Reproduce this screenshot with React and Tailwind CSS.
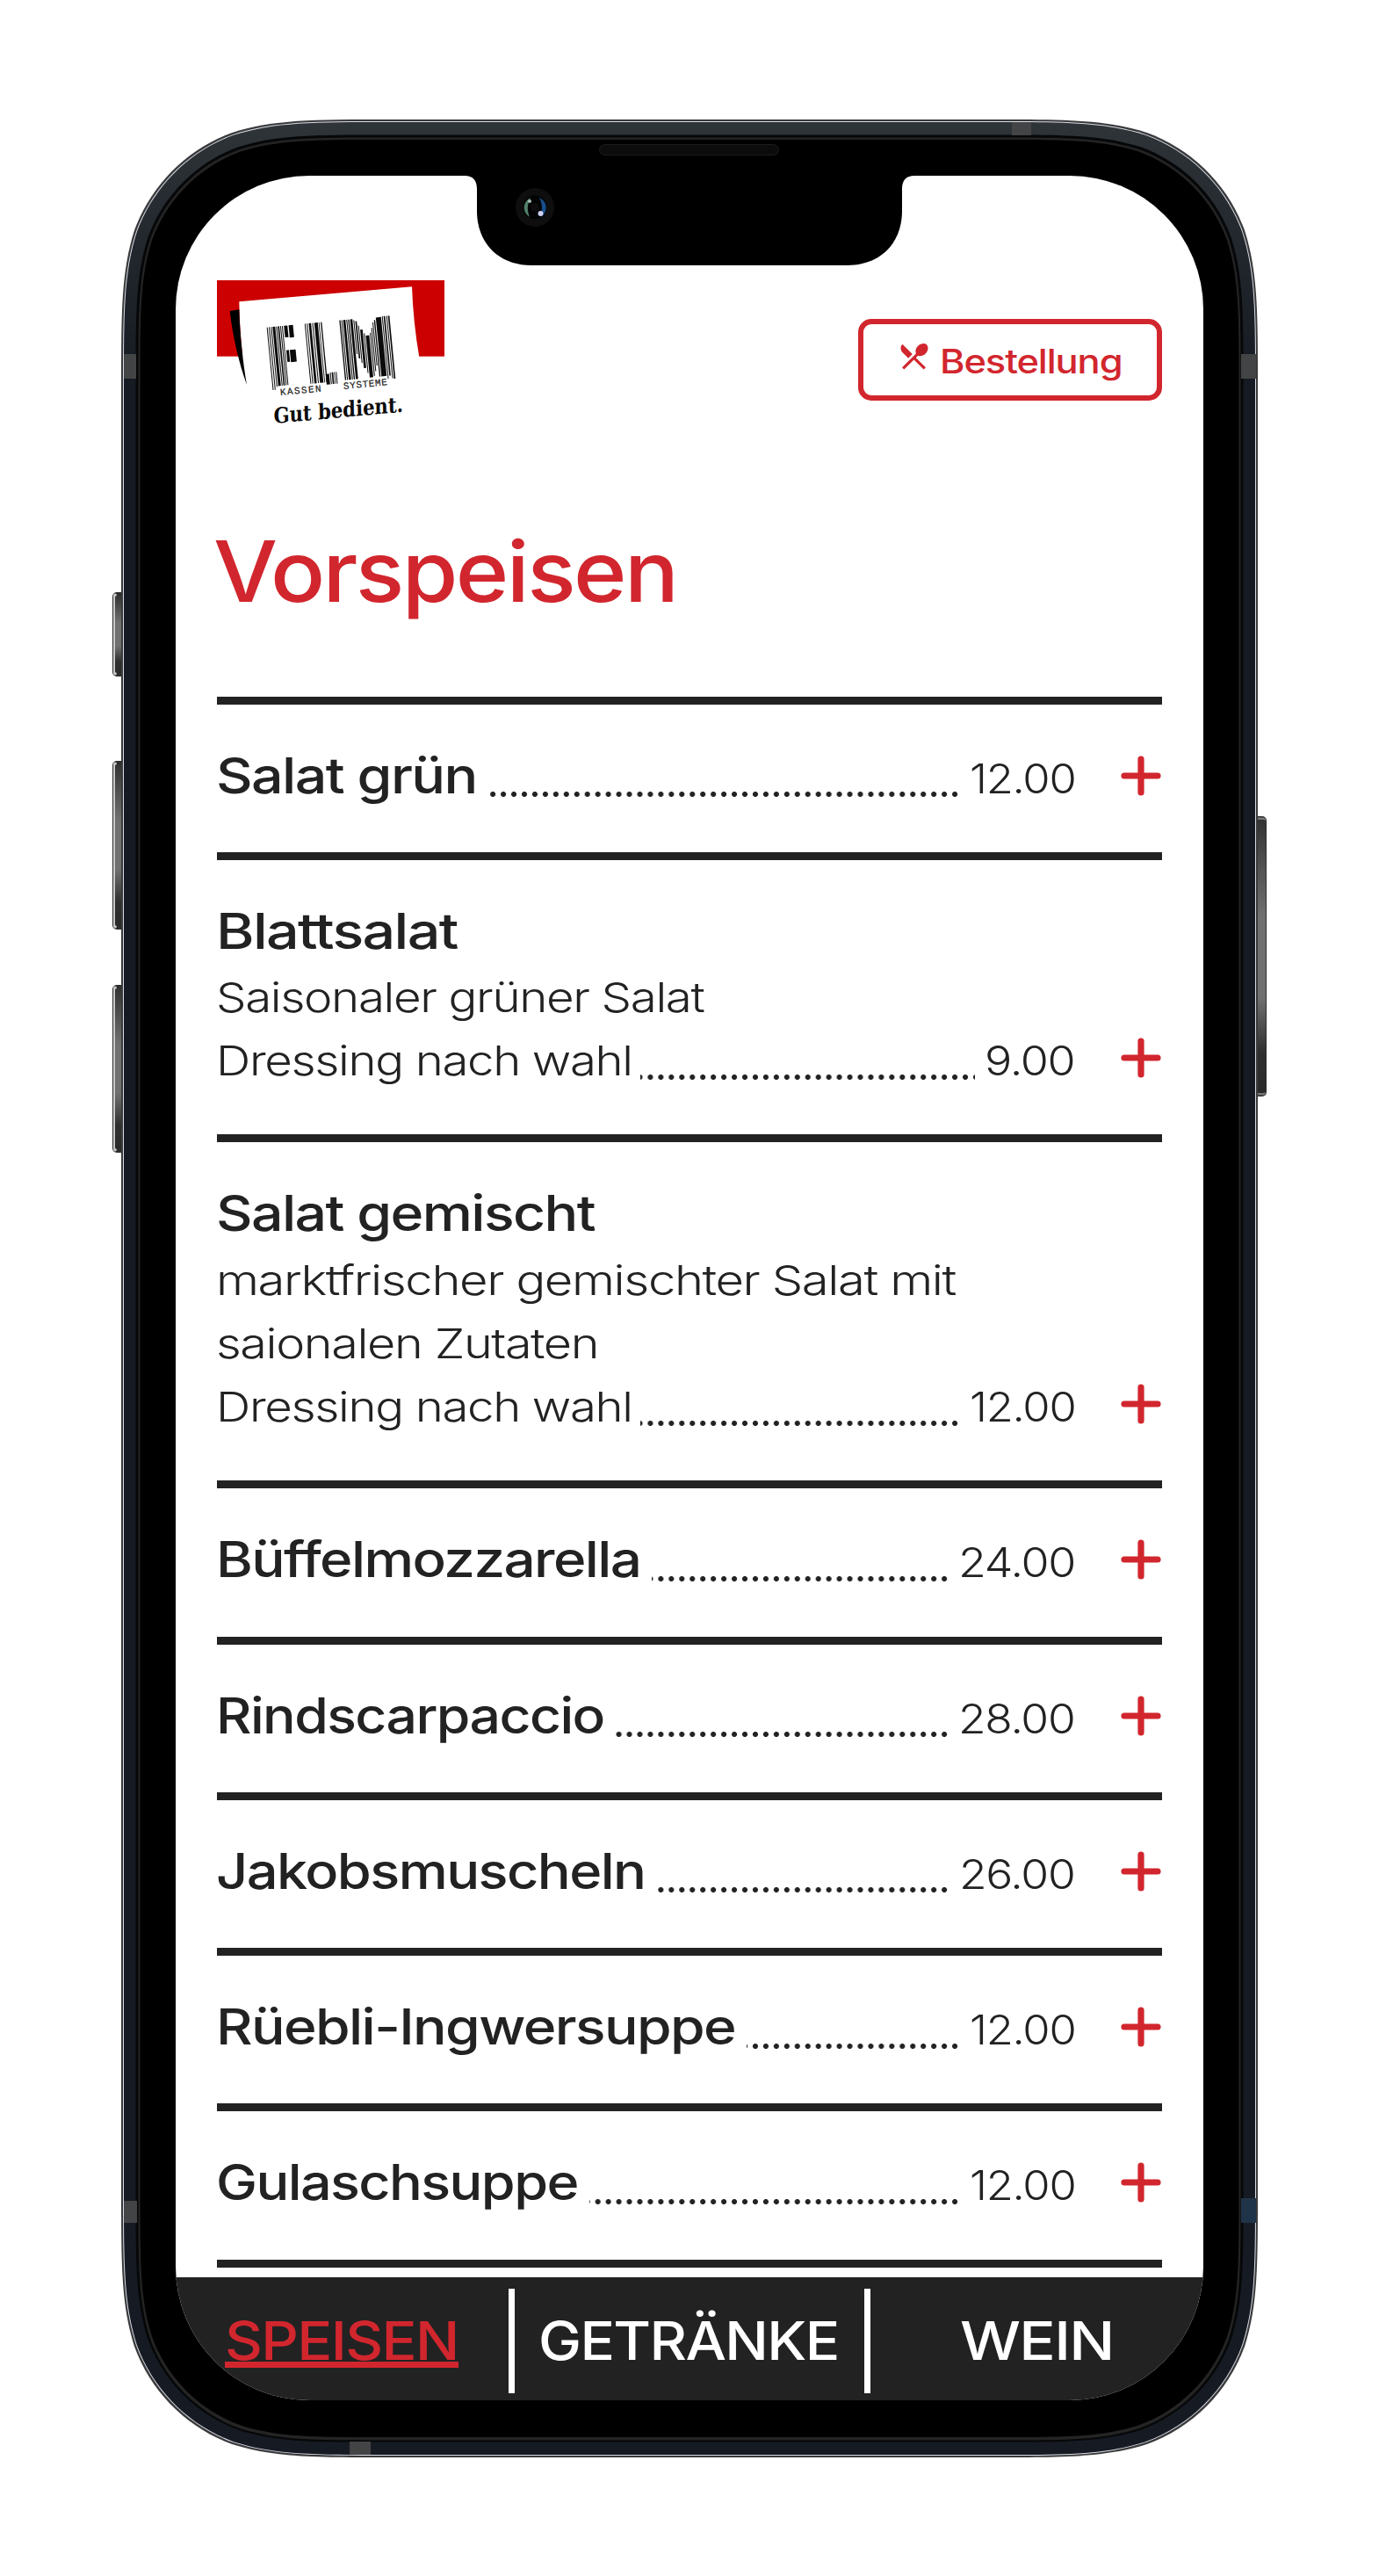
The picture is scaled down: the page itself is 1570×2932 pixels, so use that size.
import { useLayoutEffect, useRef, useState } from "react";
import { MdRestaurantMenu } from "react-icons/md";

const DISHES = [
  { lines: [["Salat grün", 297]], price: "12.00", priceWidth: 120 },
  {
    lines: [["Blattsalat", 275], ["Saisonaler grüner Salat", 556], ["Dressing nach wahl", 474]],
    price: "9.00",
    priceWidth: 103,
  },
  {
    lines: [
      ["Salat gemischt", 431],
      ["marktfrischer gemischter Salat mit", 842],
      ["saionalen Zutaten", 435],
      ["Dressing nach wahl", 474],
    ],
    price: "12.00",
    priceWidth: 120,
  },
  { lines: [["Büffelmozzarella", 483]], price: "24.00", priceWidth: 133 },
  { lines: [["Rindscarpaccio", 442]], price: "28.00", priceWidth: 133 },
  { lines: [["Jakobsmuscheln", 488]], price: "26.00", priceWidth: 132 },
  { lines: [["Rüebli-Ingwersuppe", 591]], price: "12.00", priceWidth: 120 },
  { lines: [["Gulaschsuppe", 412]], price: "12.00", priceWidth: 120 },
];

// Stretches a run of text horizontally so that it fills the given width.
function Fit({ width, className = "", children }) {
  const ref = useRef(null);
  const [scale, setScale] = useState(1);
  useLayoutEffect(() => {
    const measure = () => {
      if (ref.current) setScale(width / ref.current.offsetWidth);
    };
    measure();
    document.fonts?.ready.then(measure);
  }, [width]);
  return (
    <span className={`block shrink-0 tracking-[-0.025em] whitespace-nowrap ${className}`} style={{ width }}>
      <span ref={ref} className="inline-block origin-left" style={{ transform: `scaleX(${scale})` }}>
        {children}
      </span>
    </span>
  );
}

// Rounded rectangle with continuous-curvature corners.
function smooth(x, y, w, h, r) {
  const a = 1.528665 * r, b = 1.08849 * r, c = 0.868407 * r;
  const d = 0.631494 * r, e = 0.074911 * r, f = 0.372824 * r, g = 0.16906 * r;
  const X = x + w, Y = y + h;
  return [
    `M${x + a} ${y}H${X - a}`,
    `C${X - b} ${y} ${X - c} ${y} ${X - d} ${y + e}`,
    `C${X - f} ${y + g} ${X - g} ${y + f} ${X - e} ${y + d}`,
    `C${X} ${y + c} ${X} ${y + b} ${X} ${y + a}V${Y - a}`,
    `C${X} ${Y - b} ${X} ${Y - c} ${X - e} ${Y - d}`,
    `C${X - g} ${Y - f} ${X - f} ${Y - g} ${X - d} ${Y - e}`,
    `C${X - c} ${Y} ${X - b} ${Y} ${X - a} ${Y}H${x + a}`,
    `C${x + b} ${Y} ${x + c} ${Y} ${x + d} ${Y - e}`,
    `C${x + f} ${Y - g} ${x + g} ${Y - f} ${x + e} ${Y - d}`,
    `C${x} ${Y - c} ${x} ${Y - b} ${x} ${Y - a}V${y + a}`,
    `C${x} ${y + b} ${x} ${y + c} ${x + e} ${y + d}`,
    `C${x + g} ${y + f} ${x + f} ${y + g} ${x + d} ${y + e}`,
    `C${x + c} ${y} ${x + b} ${y} ${x + a} ${y}Z`,
  ].join("");
}

function SideButton({ x, y, h, right }) {
  return (
    <g transform={right ? `translate(${x + 13} ${y}) scale(-1 1)` : `translate(${x} ${y})`}>
      <rect width="20" height={h} rx="5" fill="#2d2d2d" />
      <rect x="1" y="1.500" width={right ? 14 : 4} height={h - 3} rx="3" fill={right ? "#777" : "#c9cac7"} />
      <rect x={right ? 1 : 3} y="4" width="14" height={h - 8} rx="2" fill="url(#btn)" />
    </g>
  );
}

function Body() {
  return (
    <svg className="absolute inset-0" width="1570" height="2932" viewBox="0 0 1570 2932" aria-hidden="true">
      <defs>
        <linearGradient id="metal" x1="0" y1="0" x2="0" y2="1">
          <stop offset="0" stopColor="#2e3438" />
          <stop offset="0.05" stopColor="#23282e" />
          <stop offset="0.11" stopColor="#161b23" />
          <stop offset="1" stopColor="#161b23" />
        </linearGradient>
        <linearGradient id="btn" x1="0" y1="0" x2="0" y2="1">
          <stop offset="0" stopColor="#333" />
          <stop offset="0.35" stopColor="#707070" />
          <stop offset="0.65" stopColor="#707070" />
          <stop offset="0.85" stopColor="#303030" />
          <stop offset="1" stopColor="#2a2a2a" />
        </linearGradient>
      </defs>
      <SideButton x={128} y={674} h={96} />
      <SideButton x={128} y={866} h={192} />
      <SideButton x={128} y={1121} h={191} />
      <SideButton x={1429} y={929} h={319} right />
      <path d={smooth(138, 136, 1294, 2661, 200)} fill="#3a3a3c" />
      <path d={smooth(140, 138, 1290, 2657, 199)} fill="#d9dde6" />
      <path d={smooth(141, 139, 1288, 2655, 198)} fill="url(#metal)" />
      <path d={smooth(154.5, 153.5, 1261, 2626, 185)} fill="#060708" />
      <path d={smooth(157.5, 156.5, 1255, 2621, 182)} fill="#242424" />
      <path d={smooth(159.5, 159, 1251, 2615, 181)} fill="#000" />
      <g fill="#424445">
        <rect x="1152" y="139" width="22" height="15" />
        <rect x="141" y="403" width="14" height="28" />
        <rect x="1413" y="403" width="17" height="28" />
        <rect x="141" y="2505" width="15" height="25" />
        <rect x="398" y="2779" width="24" height="15" />
      </g>
      <rect x="1413" y="2502" width="17" height="28" fill="#1f3448" />
      <rect x="682.5" y="164.5" width="204" height="12" rx="6" fill="#0c0c0c" stroke="#1c1c1c" />
    </svg>
  );
}

function Notch() {
  return (
    <svg className="absolute left-[329px] top-0" width="512" height="103" viewBox="0 0 512 103" aria-hidden="true">
      <path d="M0 0C9 0 14 5 14 15V40C14 78 40 102 76 102H436C472 102 498 78 498 40V15C498 5 503 0 512 0Z" fill="#000" />
      <circle cx="80" cy="36" r="22" fill="#0e0e0f" />
      <circle cx="80" cy="36" r="13.5" fill="#020304" />
      <path d="M75 25C66 30 65 41 74 47C71 40 71 32 75 25Z" fill="#517d69" />
      <path d="M85 25C95 30 95 41 87 47C87 41 90 35 85 25Z" fill="#174f8c" />
      <circle cx="80" cy="36" r="5" fill="#0d0d0d" />
      <circle cx="74" cy="29" r="2" fill="#a9c0b5" />
      <circle cx="86.500" cy="43" r="3" fill="#cfcff0" />
    </svg>
  );
}

// Barcode stripes: [x, width, top, bottom] in the tilted frame of the logo card.
const BARS = [
  [0, 3, 0, 215], [7, 3, 0, 215], [14, 3, 0, 205], [20, 9, 0, 203], [32, 3, 0, 203], [38, 5, 0, 203], [46, 3, 0, 203], [52, 3, 0, 203],
  [59, 12, 0, 40], [75, 15, 0, 42], [59, 9, 84, 124], [71, 20, 84, 126],
  [130, 3, 0, 206], [137, 3, 0, 206], [144, 8, 0, 206], [156, 3, 0, 206], [163, 12, 0, 206], [178, 2.5, 0, 206], [185, 4, 0, 206],
  [185, 12, 178, 214], [200, 3, 174, 214], [206, 5, 174, 214], [214, 2.5, 174, 214], [220, 3, 174, 214],
  [249, 4, 0, 205], [256, 3, 0, 205], [262, 8, 0, 205], [273, 3, 0, 205], [279, 4, 0, 205], [286, 8, 0, 205],
  [297, 3, 4, 120], [303, 5, 8, 136], [311, 3, 24, 152], [317, 8, 38, 170], [328, 3, 52, 188], [334, 12, 60, 204],
  [349, 3, 52, 200], [355, 3, 36, 184], [361, 3, 18, 166], [367, 4, 10, 204], [374, 18, 2, 204], [395, 3, 0, 214], [401, 5, 0, 204],
  [410, 3, 0, 214], [416, 5, 0, 216],
];

function Logo() {
  return (
    <svg className="shrink-0" width="259" height="171" viewBox="51 57 777 513" role="img" aria-label="FLM Kassensysteme">
      <rect x="51" y="57" width="777" height="260" fill="#cc0000" />
      <path d="M127 130L717 79C720 160 728 240 742 320L152 420C138 320 128 230 127 130Z" fill="#fff" />
      <path d="M95 162L127 157C129 240 140 340 153 414C125 335 105 250 95 162Z" fill="#000" />
      <g transform="translate(221 218) rotate(-5.5)" fill="#0b0b0b">
        {BARS.map(([x, w, t, b], i) => (
          <rect key={i} x={x} y={t} width={w} height={b - t} />
        ))}
      </g>
      <g fill="#222" stroke="#222" strokeWidth="0.600" fontFamily="'Liberation Mono', monospace" fontSize="33">
        <text transform="translate(268 450) rotate(-5.5)" textLength="140">KASSEN</text>
        <text transform="translate(484 429) rotate(-5.5)" textLength="150">SYSTEME</text>
      </g>
      <text
        transform="translate(245 546) rotate(-5.2) skewX(-4)"
        fill="#0b0b0b"
        fontFamily="'DejaVu Serif', serif"
        fontWeight="700"
        fontSize="73"
        textLength="444"
        lengthAdjust="spacingAndGlyphs"
      >
        Gut bedient.
      </text>
    </svg>
  );
}

function Plus() {
  return (
    <svg className="mr-px shrink-0" width="46" height="46" viewBox="0 0 46 46" stroke="#d2262e" strokeWidth="7.200" strokeLinecap="round" role="img" aria-label="Hinzufügen">
      <path d="M23 4V42M4 23H42" />
    </svg>
  );
}

function Dish({ lines, price, priceWidth }) {
  return (
    <li className="border-t-[9px] border-[#222] pt-[45px] pb-[51.1px]">
      {lines.map(([text, width], i) => {
        const last = i === lines.length - 1;
        const face =
          i === 0
            ? "-ml-px text-[56px] leading-[72px] font-[470]"
            : "-ml-px text-[46.5px] leading-[78px] font-[350] [font-feature-settings:'calt'_0,'liga'_0]";
        if (!last) {
          return (
            <div key={i} className="h-[72.2px]">
              <Fit width={width} className={face}>{text}</Fit>
            </div>
          );
        }
        return (
          <div key={i} className="flex h-[72.2px] justify-between">
            <div className="flex h-[72.2px] w-[977px] items-start justify-between bg-[radial-gradient(circle_at_center,#222_2.6px,transparent_3.4px)] bg-[length:11.963px_12px] bg-[position:-2.64px_51.5px] bg-repeat-x">
              <div className={i === 0 ? "bg-white pr-[13px]" : "bg-white pr-[9px]"}>
                <Fit width={width} className={face}>{text}</Fit>
              </div>
              <div className="bg-white pl-[11px]">
                <Fit width={priceWidth} className="text-[46.5px] leading-[78px] font-[350]">{price}</Fit>
              </div>
            </div>
            <div className="pt-[13px]">
              <Plus />
            </div>
          </div>
        );
      })}
    </li>
  );
}

export default function App() {
  return (
    <div className="relative h-[2932px] w-[1570px] overflow-hidden bg-white px-[200px] pt-[200px] font-['Inter',sans-serif] text-[#222]">
      <Body />
      <main className="relative flex h-[2532px] w-[1170px] flex-col overflow-hidden rounded-[152px] bg-white">
        <Notch />
        <div className="min-h-0 flex-1 overflow-hidden px-[47px] pt-[119px]">
          <header className="flex h-[171px] items-start justify-between">
            <Logo />
            <button className="mt-[44px] flex h-[93px] w-[346px] items-start rounded-[15px] border-[6px] border-[#d2262e] pl-[38px] text-[#d2262e]">
              <MdRestaurantMenu className="mt-[17px] mr-[10px] size-[39px] shrink-0" />
              <Fit width={208} className="text-left text-[38px] leading-[85px] font-[470]">Bestellung</Fit>
            </button>
          </header>
          <h1 className="-ml-[4px] mt-[98px] h-[204.500px] text-[96px] leading-[124px] font-[470] text-[#d2262e]">
            <Fit width={527}>Vorspeisen</Fit>
          </h1>
          <ul>
            {DISHES.map((dish) => (
              <Dish key={dish.lines[0][0]} {...dish} />
            ))}
            <li className="h-[9px] bg-[#222]" />
          </ul>
        </div>
        <nav className="flex h-[140px] shrink-0 items-start bg-[#222] pt-[13px] text-[61px] leading-[118px] font-[470] text-white">
          <a className="flex h-[119px] w-[386px] border-r-[7px] border-white pl-[56px] text-[#d2262e]">
            <Fit width={266} className="h-[90px] border-b-[7px] border-[#d2262e]">SPEISEN</Fit>
          </a>
          <a className="flex h-[119px] w-[405px] border-r-[7px] border-white pl-[27px]">
            <Fit width={342}>GETRÄNKE</Fit>
          </a>
          <a className="flex h-[119px] flex-1 pl-[102px]">
            <Fit width={175}>WEIN</Fit>
          </a>
        </nav>
      </main>
    </div>
  );
}
